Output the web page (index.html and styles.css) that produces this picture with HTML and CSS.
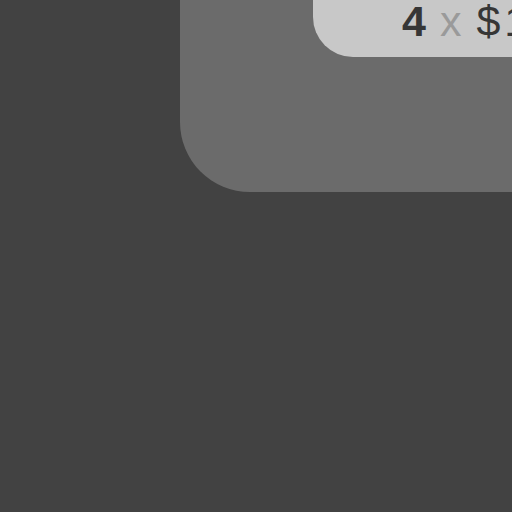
FILE: index.html
```html
<!DOCTYPE html>
<html>
<head>
<meta charset="utf-8">
<link rel="stylesheet" href="styles.css">
</head>
<body>
<div class="stage">
  <div class="card">
    <div class="price">
      <span class="qty">4</span>
      <span class="times">x</span>
      <span class="amount">$19.99</span>
    </div>
  </div>
</div>
</body>
</html>
```
FILE: styles.css
```css
html, body {
  margin: 0;
  padding: 0;
  background: #424242;
  overflow: hidden;
  width: 512px;
  height: 512px;
}
.stage {
  display: flex;
  padding-left: 180px;
}
.card {
  flex: none;
  width: 500px;
  height: 192px;
  background: #6b6b6b;
  border-bottom-left-radius: 70px;
  display: flex;
  flex-direction: column;
  padding-left: 133px;
  box-sizing: border-box;
}
.price {
  height: 57px;
  background: #c8c8c8;
  border-bottom-left-radius: 40px;
  padding-left: 89px;
  display: flex;
  align-items: flex-start;
  font-family: "Liberation Sans", Arial, sans-serif;
  font-size: 43px;
  line-height: 1;
  white-space: nowrap;
}
.qty {
  font-weight: bold;
  color: #363636;
}
.times {
  color: #9a9a9a;
  margin-left: 14px;
}
.amount {
  color: #363636;
  margin-left: 15px;
  letter-spacing: 4px;
}
```
